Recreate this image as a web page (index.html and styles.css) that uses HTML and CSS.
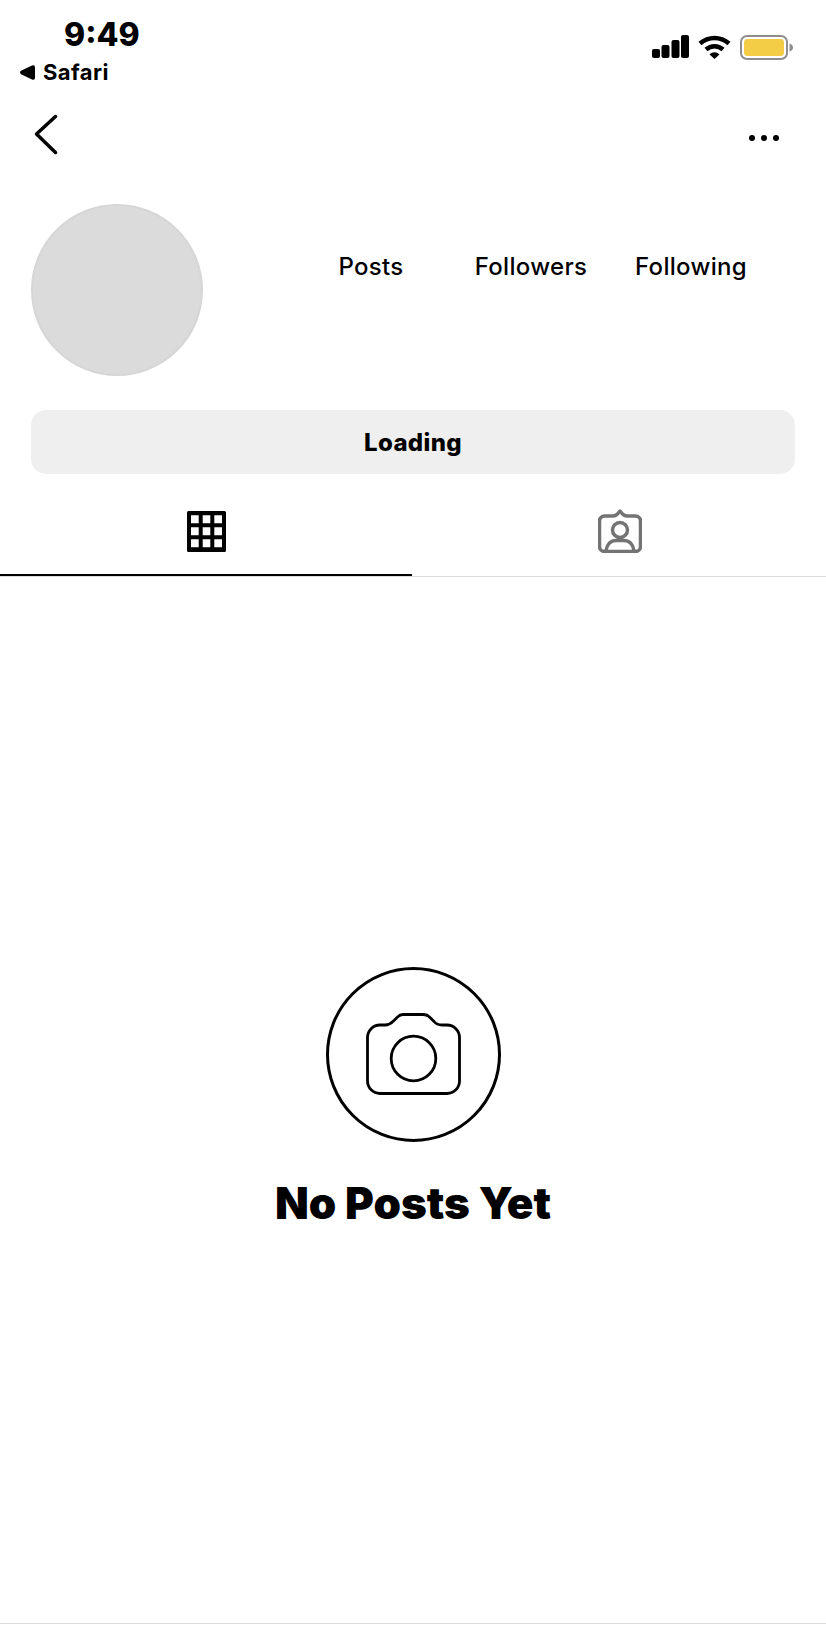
FILE: index.html
```html
<!DOCTYPE html>
<html lang="en">
<head>
<meta charset="utf-8">
<title>Profile</title>
<link rel="stylesheet" href="styles.css">
</head>
<body>
<div class="page">
  <header class="status">
    <div class="status-left">
      <div class="time">9:49</div>
      <div class="back-app">
        <svg class="back-tri" viewBox="0 0 15 15" width="15" height="15"><path d="M1 5.800 L12 0.600 Q15 -0.500 15 2.500 V12.500 Q15 15.500 12 14.400 L1 9.200 Q-1 7.500 1 5.800 Z" fill="#000"/></svg>
        <span>Safari</span>
      </div>
    </div>
    <div class="status-right">
      <svg width="37" height="23" viewBox="0 0 37 23"><rect x="0" y="14" width="8" height="9" rx="2"/><rect x="9.500" y="10" width="8" height="13" rx="2"/><rect x="19.500" y="5" width="8" height="18" rx="2"/><rect x="29" y="0" width="8" height="23" rx="2"/></svg>
      <svg width="33" height="24" viewBox="0 0 33 24"><path d="M2 8.500 C10.500 1 22.500 1 31 8.500" fill="none" stroke="#000" stroke-width="4.500"/><path d="M8 14.500 C13 10 20 10 25 14.500" fill="none" stroke="#000" stroke-width="4.500"/><path d="M11.500 19.500 C14.500 16.500 18.500 16.500 21.500 19.500 L16.500 24 Z"/></svg>
      <svg width="53" height="25" viewBox="0 0 53 25"><rect x="1" y="1" width="46" height="23" rx="6" fill="#fff" stroke="#8e8e8e" stroke-width="2"/><rect x="4" y="4" width="40" height="17" rx="3.500" fill="#f4cd47"/><path d="M49.500 8.500 C51.500 9 53 10.500 53 12.500 C53 14.500 51.500 16 49.500 16.500 Z" fill="#8e8e8e"/></svg>
    </div>
  </header>

  <nav class="nav">
    <svg width="24" height="41" viewBox="0 0 24 41"><path d="M21.500 2.500 L2.500 20 L21.500 38.500" fill="none" stroke="#000" stroke-width="3.500" stroke-linecap="round" stroke-linejoin="round"/></svg>
    <svg class="more" width="30" height="6" viewBox="0 0 30 6"><circle cx="3" cy="3" r="3"/><circle cx="15" cy="3" r="3"/><circle cx="27" cy="3" r="3"/></svg>
  </nav>

  <section class="profile">
    <div class="avatar"></div>
    <div class="stats">
      <div class="stat">Posts</div>
      <div class="stat">Followers</div>
      <div class="stat">Following</div>
    </div>
  </section>

  <div class="loading">Loading</div>

  <div class="tabs">
    <div class="tab tab-active">
      <svg width="39" height="41" viewBox="0 0 39 41"><path fill-rule="evenodd" d="M1.500 0 H37.500 A1.500 1.500 0 0 1 39 1.500 V39.500 A1.500 1.500 0 0 1 37.500 41 H1.500 A1.500 1.500 0 0 1 0 39.500 V1.500 A1.500 1.500 0 0 1 1.500 0 Z M4 4.300 V12.300 H11.700 V4.300 Z M15.700 4.300 V12.300 H23.300 V4.300 Z M27.300 4.300 V12.300 H35 V4.300 Z M4 16.300 V24.300 H11.700 V16.300 Z M15.700 16.300 V24.300 H23.300 V16.300 Z M27.300 16.300 V24.300 H35 V16.300 Z M4 28.300 V36.300 H11.700 V28.300 Z M15.700 28.300 V36.300 H23.300 V28.300 Z M27.300 28.300 V36.300 H35 V28.300 Z"/></svg>
    </div>
    <div class="tab tab-tagged">
      <svg width="44" height="44" viewBox="0 0 44 44" fill="none" stroke="#737373" stroke-width="3.500" stroke-linejoin="round"><path d="M6.500 7 H15 C17 7 18 6.500 19.500 5 L22 2 L24.500 5 C26 6.500 27 7 29 7 H37.500 A5 5 0 0 1 42.500 12 V37.500 A5 5 0 0 1 37.500 42.500 H6.500 A5 5 0 0 1 1.500 37.500 V12 A5 5 0 0 1 6.500 7 Z"/><circle cx="22" cy="21" r="7.500"/><path d="M8 41.500 C9 35 13 31.500 18 31.500 H26 C31 31.500 35 35 36 41.500"/></svg>
    </div>
  </div>

  <main class="empty">
    <div class="empty-ring">
      <svg class="camera" width="95" height="82" viewBox="0 0 95 82" fill="none" stroke="#000" stroke-width="2.800"><path d="M14 12 H19 C23 12 25 10.500 27.500 8 L31 4.500 C33 2.500 35 1.500 37 1.500 H57 C60 1.500 62 2.500 64 4.500 L68 8.500 C70 11 73 12 76 12 H81 A12.500 12.500 0 0 1 93.500 24.500 V68 A12.500 12.500 0 0 1 81 80.500 H14 A12.500 12.500 0 0 1 1.500 68 V24.500 A12.500 12.500 0 0 1 14 12 Z"/><circle cx="47.500" cy="45.500" r="22.300"/></svg>
    </div>
    <h1 class="empty-title">No Posts Yet</h1>
  </main>

  <div class="bottom-rule"></div>
</div>
</body>
</html>
```

FILE: styles.css
```css
* {
  box-sizing: border-box;
}

html,
body {
  margin: 0;
  padding: 0;
  background: #fff;
}

body {
  font-family: Inter, "Noto Sans", sans-serif;
  color: #000;
}

.page {
  display: flex;
  flex-direction: column;
  width: 826px;
  height: 1646px;
  overflow: hidden;
}

.status {
  display: flex;
  justify-content: space-between;
  height: 100px;
  padding: 17px 33px 0 20px;
}

.time {
  margin-left: 44px;
  font-size: 32px;
  font-weight: 800;
  line-height: 36px;
}

.back-app {
  display: flex;
  align-items: center;
  gap: 8px;
  margin-top: 6px;
  font-size: 22px;
  font-weight: 700;
  line-height: 27px;
  letter-spacing: 0.4px;
}

.status-right {
  display: flex;
  align-items: flex-start;
  gap: 9px;
  padding-top: 18px;
}

.nav {
  display: flex;
  justify-content: space-between;
  height: 104px;
  padding: 14px 47px 0 34px;
}

.more {
  margin-top: 21px;
}

.profile {
  display: flex;
  height: 206px;
  padding-left: 31px;
}

.avatar {
  width: 172px;
  height: 172px;
  border: 2px solid #d6d6d6;
  border-radius: 50%;
  background: #dbdbdb;
}

.stats {
  display: grid;
  grid-template-columns: repeat(3, 160px);
  margin-left: 88px;
  padding-top: 48px;
}

.stat {
  font-size: 24px;
  font-weight: 500;
  line-height: 30px;
  letter-spacing: 0.3px;
  text-align: center;
}

.loading {
  display: flex;
  align-items: center;
  justify-content: center;
  height: 64px;
  margin: 0 31px;
  border-radius: 15px;
  background: #efefef;
  font-size: 24px;
  font-weight: 800;
  letter-spacing: 0.35px;
}

.tabs {
  display: flex;
  height: 103px;
  border-bottom: 1px solid #dbdbdb;
}

.tab {
  display: flex;
  flex: 1;
  align-items: flex-start;
  justify-content: center;
  padding-top: 35px;
}

.tab-active {
  flex: 0 0 412px;
  height: 102px;
  padding-top: 37px;
  border-bottom: 2px solid #000;
}

.tab-tagged {
  padding-left: 2px;
}

.empty {
  display: flex;
  flex: 1;
  flex-direction: column;
  align-items: center;
  padding-top: 390px;
}

.empty-ring {
  display: flex;
  align-items: center;
  justify-content: center;
  width: 175px;
  height: 175px;
  border: 3px solid #000;
  border-radius: 50%;
}

.camera {
  margin-bottom: 2px;
}

.empty-title {
  margin: 35px 0 0;
  font-size: 44px;
  font-weight: 900;
  line-height: 52px;
}

.bottom-rule {
  height: 1px;
  margin-bottom: 22px;
  background: #dbdbdb;
}
```
